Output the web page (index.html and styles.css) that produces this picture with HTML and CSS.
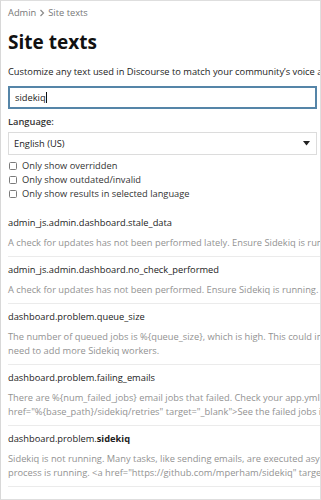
FILE: index.html
```html
<!DOCTYPE html>
<html lang="en">
<head>
    <meta charset="UTF-8">
    <meta name="viewport" content="width=device-width, initial-scale=1.0">
    <title>Site texts</title>
    <link rel="stylesheet" href="styles.css">
</head>
<body>
<div class="frame">
    <div class="breadcrumb">
        <span>Admin</span>
        <svg class="chevron" width="6" height="8" viewBox="0 0 6 8"><path d="M1.5 1 L4.5 4 L1.5 7" fill="none" stroke="#8a8a8a" stroke-width="1.2"/></svg>
        <span>Site texts</span>
    </div>

    <h1>Site texts</h1>

    <div class="intro">Customize any text used in Discourse to match your community’s voice and tone.</div>

    <div class="search">sidekiq<span class="caret"></span></div>

    <div class="label">Language:</div>
    <div class="select">
        <span>English (US)</span>
        <svg class="arrow" width="7" height="5" viewBox="0 0 7 5"><path d="M0 0 H7 L3.5 4.5 Z" fill="#222"/></svg>
    </div>

    <div class="filters">
        <label class="check"><span class="box"></span>Only show overridden</label>
        <label class="check"><span class="box"></span>Only show outdated/invalid</label>
        <label class="check"><span class="box"></span>Only show results in selected language</label>
    </div>

    <div class="results">
        <div class="site-text">
            <div class="key">admin_js.admin.dashboard.stale_data</div>
            <div class="value">A check for updates has not been performed lately. Ensure Sidekiq is running.</div>
        </div>
        <div class="site-text">
            <div class="key">admin_js.admin.dashboard.no_check_performed</div>
            <div class="value">A check for updates has not been performed. Ensure Sidekiq is running.</div>
        </div>
        <div class="site-text">
            <div class="key">dashboard.problem.queue_size</div>
            <div class="value">The number of queued jobs is %{queue_size}, which is high. This could indicate a problem with the Sidekiq process(es), or you may<br>need to add more Sidekiq workers.</div>
        </div>
        <div class="site-text">
            <div class="key">dashboard.problem.failing_emails</div>
            <div class="value">There are %{num_failed_jobs} email jobs that failed. Check your app.yml mail server settings. &lt;a<br>href="%{base_path}/sidekiq/retries" target="_blank"&gt;See the failed jobs in Sidekiq&lt;/a&gt;.</div>
        </div>
        <div class="site-text">
            <div class="key">dashboard.problem.<b>sidekiq</b></div>
            <div class="value">Sidekiq is not running. Many tasks, like sending emails, are executed asynchronously by sidekiq. Please ensure at least one sidekiq<br>process is running. &lt;a href="https://github.com/mperham/sidekiq" target="_blank"&gt;Learn about Sidekiq here&lt;/a&gt;.</div>
        </div>
    </div>
</div>
</body>
</html>
```

FILE: styles.css
```css
html, body {
    margin: 0;
    padding: 0;
    background: #fff;
}

body {
    font-family: "Open Sans", "DejaVu Sans", sans-serif;
    font-size: 9.3px;
    color: #222;
}

.frame {
    box-sizing: border-box;
    width: 321px;
    height: 500px;
    border: 1px solid #dedede;
    border-left-color: #d8d8d8;
    padding: 0 0 0 7px;
    overflow: hidden;
}

.breadcrumb {
    margin-top: 5px;
    line-height: 13px;
    color: #777;
    display: flex;
    align-items: center;
    gap: 3px;
    white-space: nowrap;
}

h1 {
    font-size: 19px;
    font-weight: 700;
    line-height: 26px;
    margin: 10px 0 10px;
    color: #111;
}

.intro {
    line-height: 14px;
    white-space: nowrap;
}

.search {
    box-sizing: border-box;
    margin-top: 7px;
    margin-right: 3px;
    height: 23px;
    border: 2px solid #5585a8;
    padding: 0 5px;
    line-height: 19px;
    display: flex;
    align-items: center;
}

.caret {
    display: inline-block;
    width: 1px;
    height: 11px;
    background: #111;
}

.label {
    margin-top: 6px;
    line-height: 14px;
    font-weight: 600;
    color: #333;
}

.select {
    box-sizing: border-box;
    margin-top: 3px;
    margin-right: 3px;
    height: 23px;
    border: 1px solid #dcdcdc;
    padding: 0 6px 0 5px;
    display: flex;
    align-items: center;
    justify-content: space-between;
}

.filters {
    margin-top: 4px;
    display: flex;
    flex-direction: column;
}

.check {
    display: flex;
    align-items: center;
    line-height: 14px;
    color: #333;
    white-space: nowrap;
}

.box {
    box-sizing: border-box;
    width: 8px;
    height: 8px;
    border: 1px solid #7a7a7a;
    border-radius: 1.5px;
    margin: 0 5px 0 1px;
}

.results {
    margin-top: 9px;
}

.site-text {
    padding: 6px 0;
    border-bottom: 1px solid #ebebeb;
}

.key {
    line-height: 14px;
    white-space: nowrap;
}

.key b {
    font-weight: 700;
}

.value {
    margin-top: 6px;
    line-height: 14px;
    color: #929292;
    white-space: nowrap;
}
```
